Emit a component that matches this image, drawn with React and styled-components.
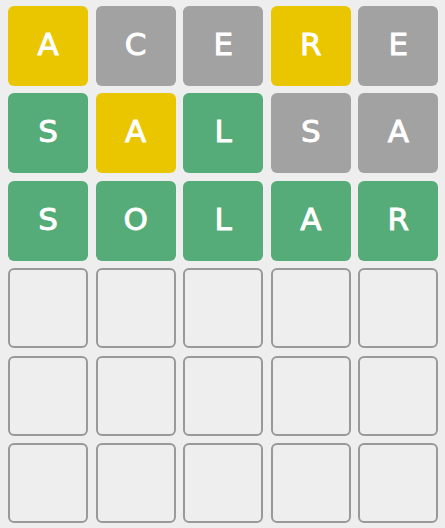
import React from 'react'
import styled, { createGlobalStyle } from 'styled-components'

const GlobalStyle = createGlobalStyle`
    html, body {
        margin: 0;
        padding: 0;
        background-color: #eeeeee;
    }
`
const Board = styled.div`
    display: grid;
    grid-template-columns: repeat(5, 80px);
    grid-auto-rows: 80px;
    column-gap: 7.6px;
    row-gap: 7.4px;
    padding: 6px 0 0 8px;
`
const colors = {
    present: '#eac600',
    absent: '#a2a2a2',
    correct: '#56ac78',
}
const Tile = styled.div`
    display: flex;
    align-items: center;
    justify-content: center;
    box-sizing: border-box;
    padding-bottom: 3px;
    border-radius: 6px;
    background-color: ${p => (p.$status ? colors[p.$status] : 'transparent')};
    border: ${p => (p.$status ? 'none' : '2px solid #999999')};
    color: #ffffff;
    font-family: 'DejaVu Sans', 'Open Sans', sans-serif;
    font-size: 31px;
    font-weight: 400;
    line-height: 1;
    -webkit-text-stroke: 0.9px #ffffff;
`

const guesses = [
    [['A', 'present'], ['C', 'absent'], ['E', 'absent'], ['R', 'present'], ['E', 'absent']],
    [['S', 'correct'], ['A', 'present'], ['L', 'correct'], ['S', 'absent'], ['A', 'absent']],
    [['S', 'correct'], ['O', 'correct'], ['L', 'correct'], ['A', 'correct'], ['R', 'correct']],
]

const App = () => {
    const rows = [...guesses]
    while (rows.length < 6) rows.push(Array(5).fill(['', null]))
    return (
        <>
            <GlobalStyle />
            <Board>
                {rows.map((row, r) =>
                    row.map(([letter, status], c) => (
                        <Tile key={`${r}-${c}`} $status={status}>{letter}</Tile>
                    ))
                )}
            </Board>
        </>
    )
}

export default App
